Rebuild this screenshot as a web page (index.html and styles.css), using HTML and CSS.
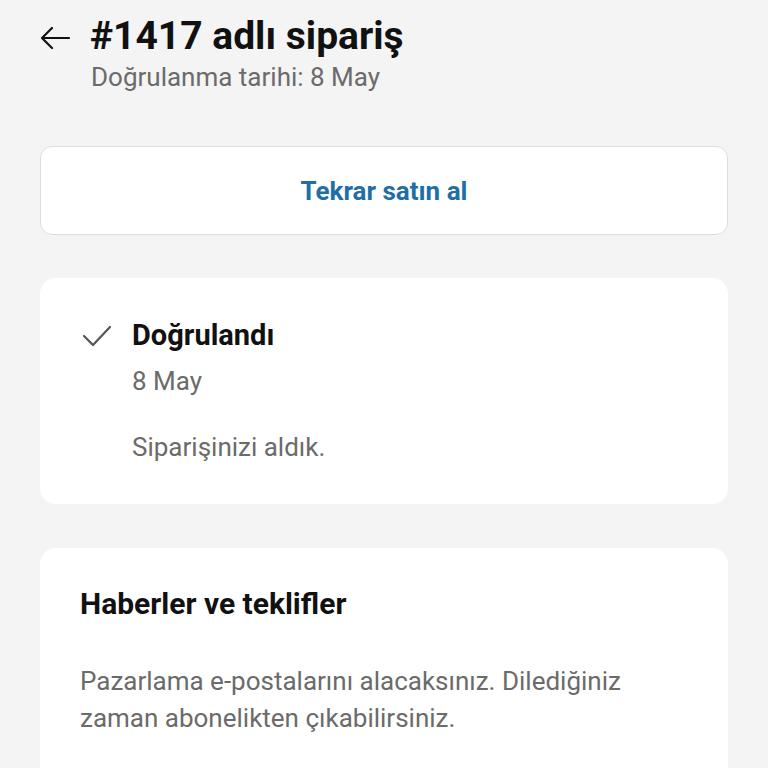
FILE: index.html
```html
<!DOCTYPE html>
<html lang="tr">
<head>
<meta charset="utf-8">
<link rel="stylesheet" href="styles.css">
</head>
<body>
<div class="page">
  <header class="header">
    <div class="title-row">
      <svg class="back" width="30" height="24" viewBox="0 0 30 24" fill="none" stroke="#111" stroke-width="2.2" stroke-linecap="round" stroke-linejoin="round"><path d="M29 12H2M12 2L2 12l10 10"/></svg>
      <h1 class="title">#1417 adlı sipariş</h1>
    </div>
    <div class="subtitle">Doğrulanma tarihi: 8 May</div>
  </header>

  <div class="btn-card">Tekrar satın al</div>

  <section class="card status">
    <div class="status-row">
      <svg class="check" width="30" height="22" viewBox="0 0 30 22" fill="none" stroke="#555" stroke-width="2.2" stroke-linecap="round" stroke-linejoin="round"><path d="M2 11l9 9L28 2"/></svg>
      <div class="status-body">
        <div class="status-title">Doğrulandı</div>
        <div class="status-date">8 May</div>
        <div class="status-text">Siparişinizi aldık.</div>
      </div>
    </div>
  </section>

  <section class="card news">
    <h2 class="news-title">Haberler ve teklifler</h2>
    <p class="news-text">Pazarlama e-postalarını alacaksınız. Dilediğiniz zaman abonelikten çıkabilirsiniz.</p>
  </section>
</div>
</body>
</html>
```

FILE: styles.css
```css
html, body {
  margin: 0;
  padding: 0;
  background: #f4f4f4;
  font-family: Roboto, "Noto Sans", sans-serif;
  color: #111;
}
.page {
  padding: 0 40px;
  display: flex;
  flex-direction: column;
}
.header {
  padding-top: 13px;
}
.title-row {
  display: flex;
  align-items: center;
  gap: 20px;
}
.back {
  flex: none;
  margin-top: 2px;
}
.title {
  margin: 0;
  font-size: 39px;
  font-weight: 700;
  line-height: 47px;
}
.subtitle {
  margin-left: 51px;
  font-size: 26px;
  color: #6b6b6b;
  line-height: 34px;
}
.btn-card {
  margin-top: 52px;
  height: 87px;
  background: #fff;
  border: 1px solid #dedede;
  border-radius: 12px;
  display: flex;
  align-items: center;
  justify-content: center;
  font-size: 26px;
  font-weight: 700;
  color: #1f6ea6;
}
.card {
  background: #fff;
  border-radius: 16px;
}
.status {
  margin-top: 43px;
  padding: 39px 40px 40px;
}
.status-row {
  display: flex;
  gap: 20px;
}
.check {
  margin-top: 8px;
  margin-left: 2px;
  flex: none;
}
.status-title {
  font-size: 29px;
  font-weight: 700;
  line-height: 36px;
}
.status-date {
  font-size: 26px;
  color: #6b6b6b;
  line-height: 34px;
  margin-top: 11px;
}
.status-text {
  font-size: 26px;
  color: #6b6b6b;
  line-height: 34px;
  margin-top: 32px;
}
.news {
  margin-top: 44px;
  padding: 37px 40px 60px;
  min-height: 300px;
}
.news-title {
  margin: 0;
  font-size: 30px;
  font-weight: 700;
  line-height: 38px;
}
.news-text {
  margin: 40px 0 0;
  font-size: 26px;
  color: #6b6b6b;
  line-height: 37px;
}
```
